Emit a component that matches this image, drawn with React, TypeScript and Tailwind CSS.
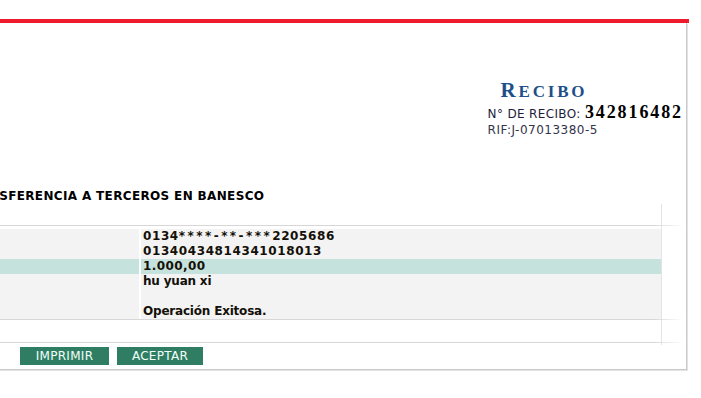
export default function App() {
  const rows = [
    { value: <><span>0134</span><span className="tracking-[2.45px]">****-**-***</span><span>2205686</span></>, cls: 'tracking-[0.6px]' },
    { value: '01340434814341018013', cls: 'tracking-[0.6px]' },
    { value: '1.000,00', cls: 'tracking-[0.4px]', highlight: true },
    { value: 'hu yuan xi', cls: 'tracking-[-0.2px]' },
    { value: '', cls: '' },
    { value: 'Operación Exitosa.', cls: 'tracking-[-0.2px]' },
  ];

  return (
    <div className="h-[398px] w-[701px] overflow-hidden bg-white font-['DejaVu_Sans','Liberation_Sans',sans-serif]">
      <div className="ml-[-60px] w-[749px] pt-[19px]">
        {/* top red bar */}
        <div className="h-[4px] bg-[#ee1b2e]" />

        <div className="w-[747px] border-r border-b border-[#c9c9c9] shadow-[1px_1px_0_#e3e3e3]">
          {/* Receipt header */}
          <div className="flex justify-end pr-[3px] pt-[55px]">
            <div>
              <h1 className="ml-[13px] h-[24px] font-['Liberation_Serif',serif] font-bold leading-[24px] tracking-[2.8px] text-[#1d4f8b]">
                <span className="text-[21px]">R</span>
                <span className="text-[17px]">ECIBO</span>
              </h1>
              <div className="h-[21px] pt-[1px] text-[12px] leading-[18px] tracking-[0.35px] text-[#1e1e3a]">
                N° DE RECIBO:{' '}
                <span className="font-['Liberation_Serif',serif] text-[18px] font-bold leading-[18px] tracking-[1.9px] text-black">
                  342816482
                </span>
              </div>
              <div className="h-[15px] text-[12px] leading-[15px] tracking-[0.5px] text-[#33334a]">RIF:J-07013380-5</div>
            </div>
          </div>

          {/* Title */}
          <div className="mt-[50px] h-[16px] whitespace-nowrap pl-[21px] text-[12px] font-bold leading-[16px] tracking-[0.35px] text-black">
            TRANSFERENCIA A TERCEROS EN BANESCO
          </div>

          {/* Detail table */}
          <div className="w-[722px] border-r border-[#e4e4e4] pt-[21px] pb-[2px]">
            <div className="mr-[-22px] h-px bg-[linear-gradient(to_right,#d7d7d7_96%,transparent)]" />
            <div className="mt-[3px]">
              {rows.map((r, i) => (
                <div key={i} className="grid h-[15px] grid-cols-[199px_1fr] gap-x-[2px]">
                  <div className={r.highlight ? 'bg-[#c6e2dc]' : 'bg-[#f3f3f3]'} />
                  <div
                    className={`whitespace-nowrap pl-[2px] text-[12px] font-bold leading-[15px] text-[#141008] ${r.cls} ${
                      r.highlight ? 'bg-[#c6e2dc]' : 'bg-[#f3f3f3]'
                    }`}
                  >
                    {r.value}
                  </div>
                </div>
              ))}
            </div>
            <div className="mr-[-22px] h-px bg-[linear-gradient(to_right,#d7d7d7_96%,transparent)]" />
            <div className="h-[22px]" />
            <div className="mr-[-22px] h-px bg-[linear-gradient(to_right,#d7d7d7_96%,transparent)]" />
          </div>

          {/* Actions */}
          <div className="flex gap-[8px] pt-[2px] pb-[4px] pl-[80px]">
            <button className="h-[18px] w-[89px] bg-[#2f7e64] text-center text-[12px] leading-[18px] tracking-[0.3px] text-[#f4fff9]">
              IMPRIMIR
            </button>
            <button className="h-[18px] w-[86px] bg-[#2f7e64] text-center text-[12px] leading-[18px] tracking-[0.3px] text-[#f4fff9]">
              ACEPTAR
            </button>
          </div>
        </div>
      </div>
    </div>
  );
}
